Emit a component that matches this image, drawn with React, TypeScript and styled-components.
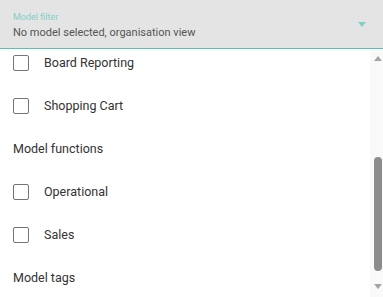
import React from "react";
import styled, { createGlobalStyle } from "styled-components";

const GlobalStyle = createGlobalStyle`
  html, body {
    margin: 0;
    padding: 0;
    background: #fff;
  }
  body {
    font-family: Roboto, "Liberation Sans", Arial, sans-serif;
  }
`;

const Panel = styled.div`
  width: 383px;
  height: 297px;
  display: flex;
  flex-direction: column;
  overflow: hidden;
  background: #fff;
`;

const FilterField = styled.div`
  height: 49px;
  flex-shrink: 0;
  box-sizing: border-box;
  background: #e4e4e4;
  border-bottom: 1px solid #5cc0b6;
  display: flex;
  align-items: center;
  padding: 3px 13px 0 13px;
`;

const FieldText = styled.div`
  flex: 1;
  display: flex;
  flex-direction: column;
`;

const FieldLabel = styled.span`
  font-size: 9px;
  line-height: 11px;
  color: #80cfc7;
  margin-bottom: 3px;
`;

const FieldValue = styled.span`
  font-size: 11px;
  line-height: 14px;
  color: #555;
`;

const Caret = styled.span`
  width: 0;
  height: 0;
  border-left: 4px solid transparent;
  border-right: 4px solid transparent;
  border-top: 5px solid #80cfc7;
  margin-right: 4px;
  margin-top: -3px;
`;

const Body = styled.div`
  flex: 1;
  display: flex;
  min-height: 0;
`;

const ListViewport = styled.div`
  flex: 1;
  overflow: hidden;
`;

const List = styled.div`
  margin-top: -8px;
  display: flex;
  flex-direction: column;
`;

const Row = styled.label`
  height: 43px;
  display: flex;
  align-items: center;
  padding-left: 13px;
  font-size: 12.5px;
  color: #333;
`;

const Box = styled.span`
  width: 16px;
  height: 16px;
  box-sizing: border-box;
  border: 1px solid #757575;
  border-radius: 2px;
  margin-right: 15px;
  flex-shrink: 0;
`;

const SectionTitle = styled.div`
  height: 43px;
  display: flex;
  align-items: center;
  padding-left: 13px;
  font-size: 12.5px;
  color: #333;
`;

const Scrollbar = styled.div`
  width: 13px;
  flex-shrink: 0;
  background: #f9f9f9;
  display: flex;
  flex-direction: column;
  align-items: center;
  padding: 7px 0 8px 2px;
  box-sizing: border-box;
`;

const Arrow = styled.span<{ $down?: boolean }>`
  width: 0;
  height: 0;
  border-left: 4px solid transparent;
  border-right: 4px solid transparent;
  ${(p) =>
    p.$down
      ? "border-top: 5px solid #a3a3a3;"
      : "border-bottom: 5px solid #a3a3a3;"}
`;

const Track = styled.div`
  flex: 1;
  width: 100%;
  display: flex;
  flex-direction: column;
  align-items: center;
  padding: 96px 0 13px;
`;

const Thumb = styled.div`
  width: 8px;
  flex: 1;
  background: #8c8c8c;
  border-radius: 4px;
`;

type Item = { kind: "option" | "title"; text: string };

const items: Item[] = [
  { kind: "option", text: "Board Reporting" },
  { kind: "option", text: "Shopping Cart" },
  { kind: "title", text: "Model functions" },
  { kind: "option", text: "Operational" },
  { kind: "option", text: "Sales" },
  { kind: "title", text: "Model tags" },
];

export default function App() {
  return (
    <>
      <GlobalStyle />
      <Panel>
        <FilterField>
          <FieldText>
            <FieldLabel>Model filter</FieldLabel>
            <FieldValue>No model selected, organisation view</FieldValue>
          </FieldText>
          <Caret />
        </FilterField>
        <Body>
          <ListViewport>
            <List>
              {items.map((it) =>
                it.kind === "title" ? (
                  <SectionTitle key={it.text}>{it.text}</SectionTitle>
                ) : (
                  <Row key={it.text}>
                    <Box />
                    {it.text}
                  </Row>
                )
              )}
            </List>
          </ListViewport>
          <Scrollbar>
            <Arrow />
            <Track>
              <Thumb />
            </Track>
            <Arrow $down />
          </Scrollbar>
        </Body>
      </Panel>
    </>
  );
}
